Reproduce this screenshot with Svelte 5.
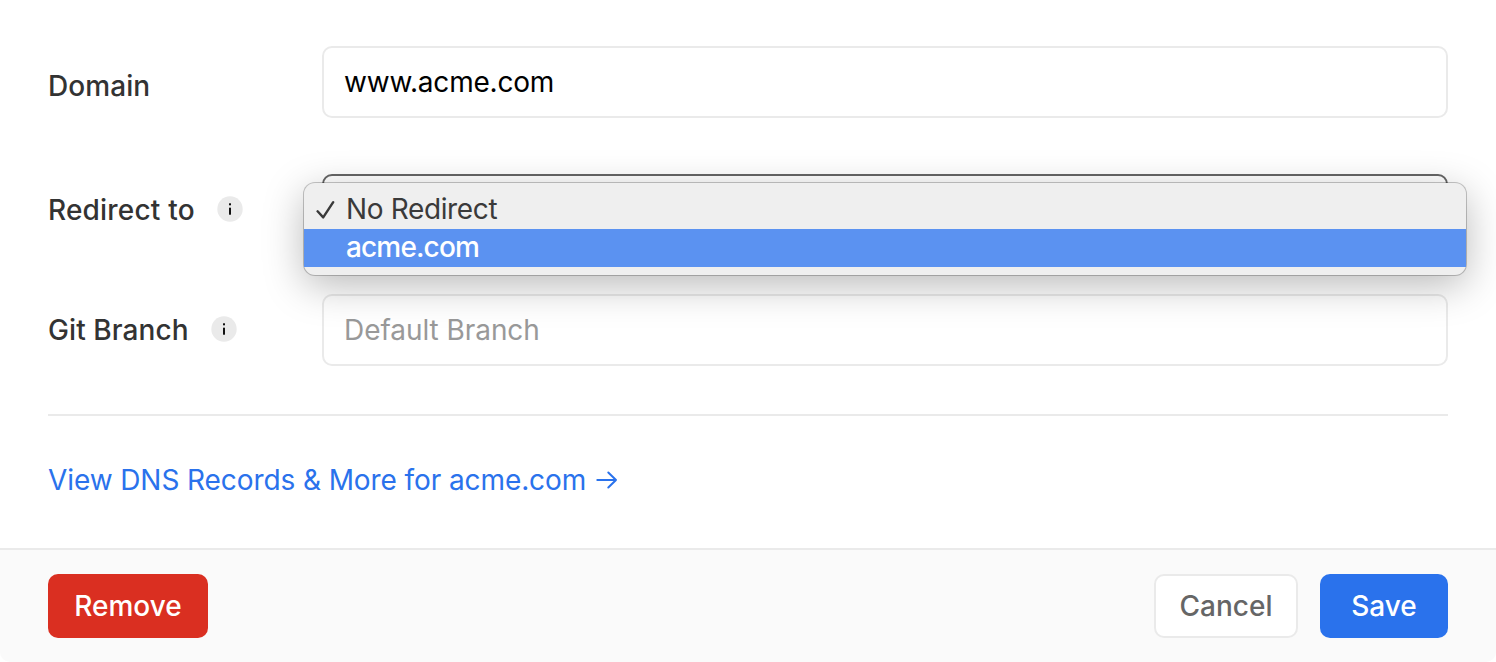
<script>
  let domain = 'www.acme.com';
  const options = ['No Redirect', 'acme.com'];
</script>

{#snippet info()}
  <svg class="info" width="26" height="26" viewBox="0 0 26 26" aria-hidden="true">
    <circle cx="13" cy="13" r="12.7" fill="#eaeaea" />
    <rect x="12" y="7.3" width="2" height="2" fill="#111" />
    <rect x="12" y="11.7" width="2" height="7" fill="#111" />
  </svg>
{/snippet}

<main class="card">
  <section class="form">
    <div class="row first">
      <span class="label"><span>Domain</span></span>
      <div class="field value"><span>{domain}</span></div>
    </div>
    <div class="row">
      <span class="label wide"><span>Redirect to</span>{@render info()}</span>
      <div class="field active">
        <div class="menu">
          <div class="option">
            <svg width="20" height="20" viewBox="0 0 20 20" aria-hidden="true">
              <path d="M1.6 11.3 7.2 17.4 17.2 2.2" fill="none" stroke="#3a3a3a" stroke-width="2.4" stroke-linecap="round" stroke-linejoin="round" />
            </svg>
            <span>{options[0]}</span>
          </div>
          <div class="option selected"><span>{options[1]}</span></div>
        </div>
      </div>
    </div>
    <div class="row">
      <span class="label"><span>Git Branch</span>{@render info()}</span>
      <div class="field placeholder"><span>Default Branch</span></div>
    </div>
    <div class="more">
      <span>View DNS Records &amp; More for acme.com</span>
      <svg width="22" height="20" viewBox="0 0 22 20" aria-hidden="true">
        <path d="M1.3 10H20M12.3 2.5 20 10l-7.7 7.5" fill="none" stroke="#2a72ec" stroke-width="2" stroke-linecap="round" stroke-linejoin="round" />
      </svg>
    </div>
  </section>
  <footer>
    <button class="remove">Remove</button>
    <button class="cancel">Cancel</button>
    <button class="save">Save</button>
  </footer>
</main>

<style>
  :global(body) {
    margin: 0;
    background: #fff;
  }
  .card {
    box-sizing: border-box;
    height: 662px;
    display: flex;
    flex-direction: column;
    overflow: hidden;
    border-radius: 0 0 10px 10px;
    font: 400 28px/40px Inter, sans-serif;
    color: #333;
    white-space: nowrap;
  }
  .form {
    flex: 1;
    padding: 46px 48px 0;
  }
  .row {
    display: grid;
    grid-template-columns: 274px 1fr;
    height: 72px;
    margin-bottom: 48px;
  }
  .row.first {
    margin-bottom: 56px;
  }
  .label {
    display: flex;
    align-items: center;
    gap: 22.5px;
    font-weight: 450;
    letter-spacing: 0.08px;
  }
  .label.wide {
    letter-spacing: 0.2px;
  }
  .first .label {
    padding-top: 8px;
  }
  .info {
    flex: none;
    margin-top: -2px;
  }
  .field {
    box-sizing: border-box;
    display: flex;
    align-items: center;
    position: relative;
    padding: 0 20px;
    border: 2px solid #eaeaea;
    border-radius: 10px;
    color: #000;
  }
  .value {
    letter-spacing: -0.22px;
  }
  .active {
    border-color: #666;
  }
  .placeholder {
    color: #999;
    letter-spacing: -0.06px;
  }
  .menu {
    position: absolute;
    z-index: 2;
    top: 7px;
    left: -20px;
    right: -20px;
    height: 92px;
    box-sizing: border-box;
    padding: 8px 0;
    border-radius: 11px;
    background: #efefef;
    box-shadow: 0 0 0 1px rgba(0, 0, 0, 0.22), 0 10px 40px rgba(0, 0, 0, 0.28);
    color: #3a3a3a;
  }
  .option {
    height: 38px;
    display: flex;
    align-items: center;
    gap: 10px;
    padding-left: 12px;
    letter-spacing: -0.36px;
  }
  .option span {
    margin-top: -2px;
  }
  .selected {
    padding-left: 42px;
    background: #5b92f1;
    color: #fff;
    font-weight: 500;
    letter-spacing: -0.85px;
  }
  .more {
    display: flex;
    align-items: center;
    gap: 10px;
    padding-top: 44px;
    border-top: 2px solid #eaeaea;
    color: #2a72ec;
    letter-spacing: -0.09px;
  }
  footer {
    box-sizing: border-box;
    height: 114px;
    display: flex;
    align-items: flex-start;
    gap: 22px;
    padding: 24px 48px 0;
    border-top: 2px solid #eaeaea;
    background: #fafafa;
  }
  button {
    box-sizing: border-box;
    height: 64px;
    padding: 0;
    border: 0;
    border-radius: 10px;
    font: inherit;
    font-weight: 450;
    color: #fff;
  }
  .remove {
    width: 160px;
    margin-right: auto;
    background: #da2f21;
  }
  .cancel {
    width: 144px;
    border: 2px solid #eaeaea;
    background: #fff;
    color: #666;
  }
  .save {
    width: 128px;
    background: #2a72ec;
  }
</style>
